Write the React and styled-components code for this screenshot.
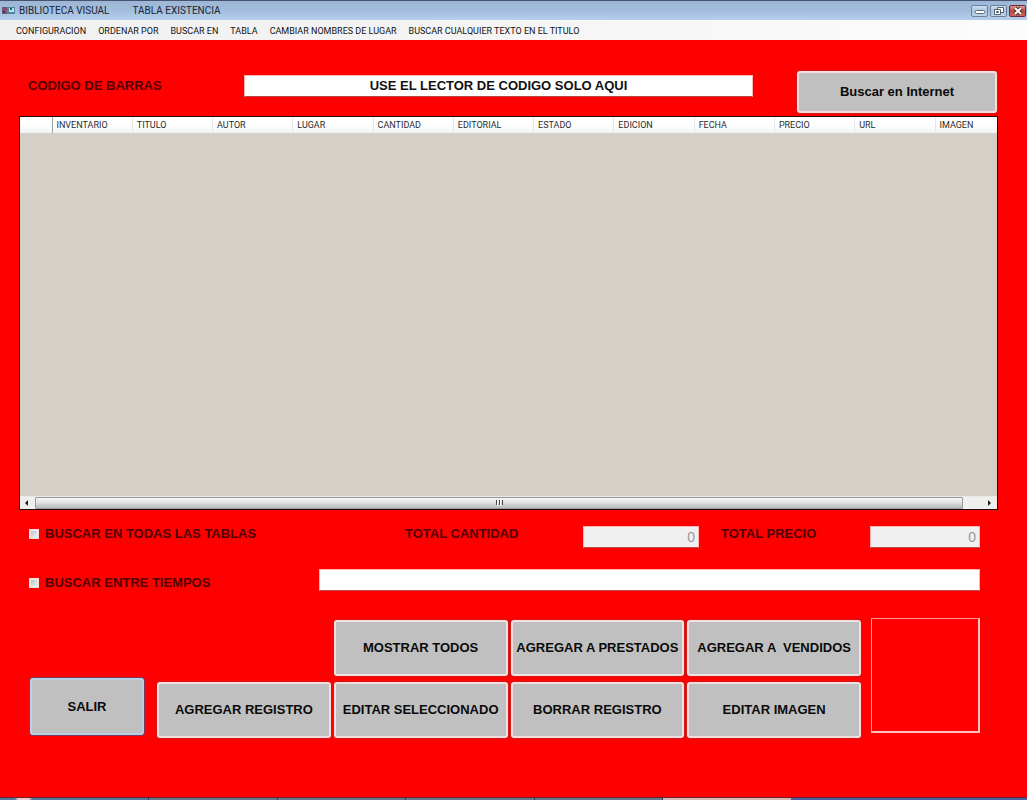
import React from 'react';
import styled, { createGlobalStyle } from 'styled-components';

const menus = [
  'CONFIGURACION',
  'ORDENAR POR',
  'BUSCAR EN',
  'TABLA',
  'CAMBIAR NOMBRES DE LUGAR',
  'BUSCAR CUALQUIER TEXTO EN EL TITULO',
];

const columns = [
  'INVENTARIO',
  'TITULO',
  'AUTOR',
  'LUGAR',
  'CANTIDAD',
  'EDITORIAL',
  'ESTADO',
  'EDICION',
  'FECHA',
  'PRECIO',
  'URL',
  'IMAGEN',
];

export default function App() {
  return (
    <Window>
      <GlobalStyle />
      <TitleBar>
        <AppIcon />
        <Title>BIBLIOTECA VISUAL</Title>
        <Title>TABLA EXISTENCIA</Title>
        <WindowControls />
      </TitleBar>
      <MenuBar>
        {menus.map((menu) => (
          <MenuButton key={menu} type='button'>
            {menu}
          </MenuButton>
        ))}
      </MenuBar>
      <Main>
        <BarcodeRow>
          <Label htmlFor='codigo'>CODIGO DE BARRAS</Label>
          <TextInput
            id='codigo'
            type='text'
            align='center'
            defaultValue='USE EL LECTOR DE CODIGO SOLO AQUI'
          />
          <SearchButton type='button'>Buscar en Internet</SearchButton>
        </BarcodeRow>
        <BooksTable />
        <TotalsRow>
          <CheckLabel>
            <Checkbox type='checkbox' name='todas' />
            BUSCAR EN TODAS LAS TABLAS
          </CheckLabel>
          <Label htmlFor='cantidad'>TOTAL CANTIDAD</Label>
          <TextInput id='cantidad' type='text' align='right' defaultValue='0' disabled />
          <PriceLabel htmlFor='precio'>TOTAL PRECIO</PriceLabel>
          <TextInput id='precio' type='text' align='right' defaultValue='0' disabled />
        </TotalsRow>
        <TimesRow>
          <CheckLabel>
            <Checkbox type='checkbox' name='tiempos' />
            BUSCAR ENTRE TIEMPOS
          </CheckLabel>
          <TextInput type='text' name='texto' aria-label='Texto a buscar' />
        </TimesRow>
        <Actions>
          <ExitButton type='button'>SALIR</ExitButton>
          <ButtonGrid>
            <Button type='button' $column={2}>MOSTRAR TODOS</Button>
            <Button type='button'>AGREGAR A PRESTADOS</Button>
            <Button type='button'>{'AGREGAR A  VENDIDOS'}</Button>
            <Button type='button'>AGREGAR REGISTRO</Button>
            <Button type='button'>EDITAR SELECCIONADO</Button>
            <Button type='button'>BORRAR REGISTRO</Button>
            <Button type='button'>EDITAR IMAGEN</Button>
          </ButtonGrid>
          <CoverBox />
        </Actions>
      </Main>
      <TaskBar>
        <StartEdge />
        <Task />
        <Task />
        <Task />
        <Task />
        <Task $active />
        <TaskRest />
      </TaskBar>
    </Window>
  );
}

function AppIcon() {
  return (
    <svg width='14' height='10' viewBox='0 0 14 10' aria-hidden='true'>
      <rect x='1' y='1' width='5' height='7' fill='#6a5579' />
      <path d='M2 2h2v2H2zM4 4h2v3H4z' fill='#a0466c' />
      <path d='M2 5h2v2H2z' fill='#3c3f60' />
      <rect x='6' y='1' width='8' height='7' fill='#4f87a3' />
      <path d='M8 2h5v4H8z' fill='#b7e1ee' />
      <path d='M9 2h2v2H9z' fill='#31566f' />
    </svg>
  );
}

function WindowControls() {
  return (
    <Controls>
      <ControlButton type='button' aria-label='Minimizar'>
        <svg width='14' height='10' viewBox='0 0 14 10'>
          <rect x='2.5' y='4.5' width='9' height='3' rx='1' fill='#fff' stroke='#5b6878' />
        </svg>
      </ControlButton>
      <ControlButton type='button' aria-label='Restaurar'>
        <svg width='14' height='10' viewBox='0 0 14 10'>
          <path d='M5.5 1.5h6v5h-6z' fill='#fff' stroke='#56616f' />
          <path d='M2.5 3.5h6v5h-6z' fill='#fff' stroke='#56616f' />
          <path d='M4.5 5.5h2v1h-2z' fill='none' stroke='#56616f' />
        </svg>
      </ControlButton>
      <ControlButton type='button' aria-label='Cerrar' $close>
        <svg width='14' height='10' viewBox='0 0 14 10'>
          <path d='M4 2l6 6M10 2l-6 6' stroke='#5c2730' strokeWidth='4' />
          <path d='M4 2l6 6M10 2l-6 6' stroke='#fff' strokeWidth='2' />
        </svg>
      </ControlButton>
    </Controls>
  );
}

function BooksTable() {
  return (
    <TableFrame>
      <Table>
        <thead>
          <tr>
            <RowHead aria-label='Fila' />
            {columns.map((column) => (
              <HeadCell key={column} $last={column === 'IMAGEN'}>
                {column}
              </HeadCell>
            ))}
          </tr>
        </thead>
      </Table>
      <ScrollBar>
        <ScrollArrow type='button' aria-label='Izquierda'>
          <svg width='3' height='6' viewBox='0 0 3 6'>
            <path d='M3 0v6L0 3z' fill='#222' />
          </svg>
        </ScrollArrow>
        <Thumb>
          <svg width='7' height='6' viewBox='0 0 7 6'>
            <path d='M0 0h1v5H0zM3 0h1v5H3zM6 0h1v5H6z' fill='#444' />
            <path d='M1 1h1v5H1zM4 1h1v5H4z' fill='#fff' />
          </svg>
        </Thumb>
        <ScrollArrow type='button' aria-label='Derecha'>
          <svg width='3' height='6' viewBox='0 0 3 6'>
            <path d='M0 0v6l3-3z' fill='#222' />
          </svg>
        </ScrollArrow>
      </ScrollBar>
    </TableFrame>
  );
}

const GlobalStyle = createGlobalStyle`
  * {
    box-sizing: border-box;
  }
  body {
    margin: 0;
    background: #ff0000;
    font-family: 'Liberation Sans', Arial, sans-serif;
    font-size: 13px;
  }
  button,
  input {
    font-family: inherit;
    font-size: inherit;
    margin: 0;
  }
`;

const Window = styled.div`
  display: flex;
  flex-direction: column;
  min-height: 100vh;
`;

const TitleBar = styled.header`
  display: flex;
  align-items: center;
  height: 20px;
  padding: 0 1px;
  border-top: 1px solid #46546f;
  background: linear-gradient(#9db6d6, #a3bddd 50%, #b5cfeb);
  font-family: Roboto, sans-serif;
  font-size: 10px;
`;

const Title = styled.span`
  margin-left: 4px;
  color: #1c2430;
  & + & {
    margin-left: 23px;
  }
`;

const Controls = styled.div`
  display: flex;
  gap: 2px;
  margin-left: auto;
`;

const ControlButton = styled.button`
  display: flex;
  align-items: center;
  justify-content: center;
  width: 17px;
  height: 12px;
  padding: 0;
  border: 1px solid ${(props) => (props.$close ? '#6b2f3c' : '#6c819d')};
  border-radius: 2px;
  background: ${(props) =>
    props.$close
      ? 'linear-gradient(#d99a96, #b8483f 50%, #c4685c)'
      : 'linear-gradient(#cfdff1, #a9c1dd 50%, #bdd4ec)'};
`;

const MenuBar = styled.nav`
  display: flex;
  gap: 12px;
  height: 20px;
  padding: 0 16px;
  background: linear-gradient(90deg, #f0f0f0, #f5f5f6 50%, #fcfcfc);
  font-family: Roboto, sans-serif;
  font-size: 9px;
`;

const MenuButton = styled.button`
  padding: 1px 0 0;
  border: 0;
  background: transparent;
  color: #111;
  white-space: nowrap;
`;

const Main = styled.main`
  display: flex;
  flex: 1;
  flex-direction: column;
  padding: 31px 29px 59px 19px;
  background: #ff0000;
`;

const BarcodeRow = styled.div`
  display: grid;
  grid-template-columns: 216px 1fr 200px;
  align-items: center;
  padding: 0 1px 0 9px;
  margin-bottom: 3px;
  input {
    margin-right: 44px;
    margin-bottom: 12px;
  }
  label {
    margin-bottom: 12px;
  }
`;

const Label = styled.label`
  color: #500000;
  font-weight: bold;
  line-height: 16px;
  white-space: nowrap;
`;

const PriceLabel = styled(Label)`
  margin-left: 22px;
`;

const CheckLabel = styled(Label)`
  display: flex;
  align-items: center;
  gap: 6px;
`;

const Checkbox = styled.input`
  appearance: none;
  width: 10px;
  height: 10px;
  border: 1px solid #f0dcdc;
  background: linear-gradient(135deg, #b4bac4, #f8f8f8);
  box-shadow: inset 0 0 0 1px #e8ebee;
`;

const TextInput = styled.input`
  min-width: 0;
  height: 22px;
  padding: 0 3px 2px;
  border: 1px solid #ffb3b3;
  border-bottom-color: #b84a4a;
  border-radius: 0;
  background: #fff;
  color: #111;
  font-weight: bold;
  text-align: ${(props) => props.align || 'left'};
  &:disabled {
    padding-bottom: 0;
    background: #f0f0f0;
    color: #999;
    font-size: 14px;
    font-weight: normal;
  }
`;

const Button = styled.button`
  padding: 0 0 2px;
  border: 2px solid #f4dede;
  border-radius: 3px;
  background: #c0c0c0;
  box-shadow: 0 0 0 1px #d01818;
  color: #0a0a0a;
  font-weight: bold;
  white-space: pre;
  grid-column: ${(props) => props.$column || 'auto'};
`;

const SearchButton = styled(Button)`
  height: 42px;
`;

const ExitButton = styled(Button)`
  align-self: flex-end;
  width: 114px;
  height: 57px;
  padding: 0;
  margin: 0 13px 3px 0;
  border-color: #b9cfe6;
  box-shadow: 0 0 0 1px #7a3a5c;
`;

const TableFrame = styled.section`
  display: flex;
  flex: 1;
  flex-direction: column;
  justify-content: space-between;
  min-height: 200px;
  border: 1px solid #2a0a08;
  background: #d4d0c8;
`;

const Table = styled.table`
  width: 100%;
  border-collapse: collapse;
  table-layout: fixed;
  font-family: Roboto, sans-serif;
  font-size: 9px;
`;

const HeadCell = styled.th`
  width: ${(props) => (props.$last ? '62px' : 'auto')};
  height: 16px;
  padding: 0 0 0 4px;
  border-left: 1px solid #e6e8e8;
  background: linear-gradient(#fff, #fff 45%, #f1f3f3);
  color: #2b2b2b;
  font-weight: normal;
  text-align: left;
`;

const RowHead = styled(HeadCell)`
  width: 32px;
  border-left: 0;
  border-right: 1px solid #a0a0a0;
`;

const ScrollBar = styled.div`
  display: flex;
  height: 13px;
  border-top: 1px solid #e8e8e6;
  background: #efefed;
  button:last-child {
    margin-left: 19px;
    padding: 0;
  }
`;

const ScrollArrow = styled.button`
  display: flex;
  align-items: center;
  justify-content: center;
  width: 15px;
  padding: 0 2px 0 0;
  border: 0;
  background: transparent;
`;

const Thumb = styled.div`
  display: flex;
  flex: 1;
  align-items: center;
  justify-content: center;
  border: 1px solid #999;
  border-radius: 1px;
  background: linear-gradient(#f6f6f6, #e2e2e2 45%, #c8c8c8 75%, #bcbcbc);
`;

const TotalsRow = styled.div`
  display: grid;
  grid-template-columns: 376fr 178fr 116fr 171fr 110fr;
  align-items: start;
  padding: 16px 18px 0 10px;
`;

const TimesRow = styled.div`
  display: grid;
  grid-template-columns: 290fr 661fr;
  align-items: end;
  padding: 21px 18px 0 10px;
`;

const Actions = styled.div`
  display: flex;
  padding: 27px 18px 0 11px;
`;

const ButtonGrid = styled.div`
  display: grid;
  flex: 1;
  grid-template-columns: repeat(4, 1fr);
  grid-auto-rows: 56px;
  gap: 6px 3px;
  padding-top: 2px;
`;

const CoverBox = styled.div`
  width: 109px;
  height: 115px;
  margin-left: 10px;
  border: 1px solid #ff9a9a;
  border-right: 2px solid #ffc0c0;
  border-bottom: 2px solid #ffc0c0;
`;

const TaskBar = styled.footer`
  display: flex;
  height: 3px;
  border-top: 1px solid #6a2030;
  background: #5f7c9c;
`;

const StartEdge = styled.div`
  width: 148px;
  background: linear-gradient(90deg, #56789c 15px, #f0c8cc 18px, #f0c8cc 29px, #56789c 32px);
`;

const Task = styled.div`
  flex: 1;
  border-left: 1px solid #2d3f58;
  background: ${(props) => (props.$active ? '#d9b8b4' : '#6a7988')};
`;

const TaskRest = styled.div`
  width: 236px;
  background: #4a62a0;
`;
